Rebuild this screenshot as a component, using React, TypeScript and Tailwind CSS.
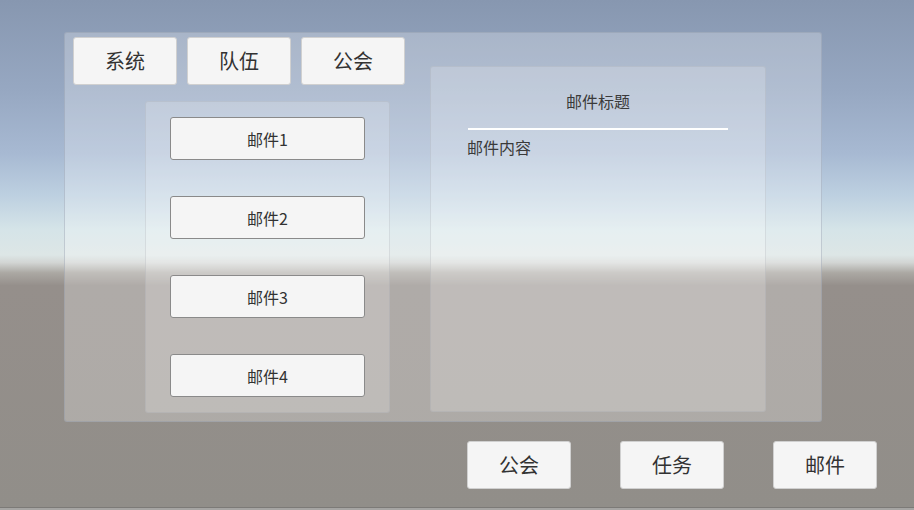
import React from "react";

const font = "font-['Noto_Sans_CJK_SC','Noto_Sans',sans-serif]";

const tabs = ["系统", "队伍", "公会"];
const mails = ["邮件1", "邮件2", "邮件3", "邮件4"];
const bottomButtons = ["公会", "任务", "邮件"];

function BigButton({ label }: { label: string }) {
  return (
    <button
      className={`${font} flex h-[48px] w-[104px] items-center justify-center rounded-[3px] border border-[#d0d0d0] bg-[#f5f5f5] text-[20px] text-[#323232]`}
    >
      {label}
    </button>
  );
}

export default function App() {
  return (
    <div
      className={`${font} relative flex h-[510px] w-[914px] flex-col overflow-hidden bg-[linear-gradient(to_bottom,#8797b0_0%,#97a8c2_18%,#a7b9d2_30%,#bccfe0_38%,#d5e4e8_45%,#dde6e6_50%,#d2d5d3_51.5%,#aba8a3_53.5%,#958f8b_56%,#918e89_100%)]`}
    >
      {/* Main window */}
      <div className="ml-[64px] mt-[32px] flex h-[390px] w-[758px] rounded-[3px] border border-[#8c97a8]/40 bg-white/25 pb-[9px] pl-[8px] pt-[4px]">
        {/* Left column: tabs + mail list */}
        <div className="flex w-[332px] flex-col">
          <div className="flex gap-[10px]">
            {tabs.map((t) => (
              <BigButton key={t} label={t} />
            ))}
          </div>
          <div className="ml-[72px] mt-[16px] flex w-[245px] flex-1 flex-col gap-[36px] rounded-[3px] border border-[#9aa0a8]/25 bg-white/20 px-[24px] py-[15px]">
            {mails.map((m) => (
              <button
                key={m}
                className="flex h-[43px] w-[195px] items-center justify-center rounded-[3px] border border-[#8a8a8a] bg-[#f5f5f5] text-[16px] text-[#323232]"
              >
                {m}
              </button>
            ))}
          </div>
        </div>

        {/* Mail detail */}
        <div className="ml-[25px] mt-[29px] flex w-[336px] flex-col rounded-[3px] border border-[#9aa0a8]/25 bg-white/20 px-[36px]">
          <div className="mt-[22px] text-center text-[16px] leading-[24px] text-[#3a3a3a]">邮件标题</div>
          <div className="mx-auto mt-[15px] h-[2px] w-[260px] self-start bg-white" />
          <div className="mt-[5px] text-[16px] leading-[24px] text-[#3a3a3a]">邮件内容</div>
        </div>
      </div>

      {/* Bottom navigation */}
      <div className="mr-[37px] mt-[19px] flex justify-end gap-[49px]">
        {bottomButtons.map((b) => (
          <BigButton key={b} label={b} />
        ))}
      </div>

      <div className="absolute bottom-0 left-0 h-[3px] w-full border-t border-[#7c7a77] bg-[#a6a5a3]" />
    </div>
  );
}
